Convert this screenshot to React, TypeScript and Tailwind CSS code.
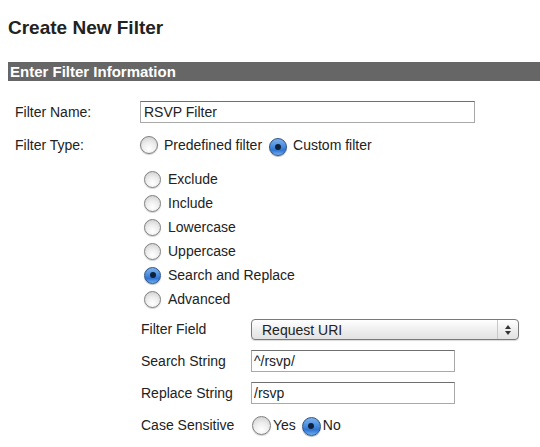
import { useState } from 'react';

type RadioProps = { checked: boolean; onClick?: () => void; size?: string };

// Aqua-style radio button drawn with gradients
function Radio({ checked, onClick, size = 'w-[18px] h-[18px]' }: RadioProps) {
  return (
    <span
      onClick={onClick}
      className={`${size} shrink-0 rounded-full inline-flex items-center justify-center border cursor-pointer ${
        checked
          ? 'border-[#2c5288] bg-[linear-gradient(180deg,#7fb2ec_0%,#4b8ede_45%,#2f74d2_70%,#6fb0f0_100%)] shadow-[0_1px_1px_rgba(0,0,0,0.3)]'
          : 'border-[#7f7f7f] bg-[radial-gradient(circle_at_50%_75%,#ffffff_0%,#eeeeee_45%,#c9c9c9_100%)] shadow-[0_1px_1px_rgba(0,0,0,0.2)]'
      }`}
    >
      {checked && <span className="w-[6px] h-[6px] rounded-full bg-[#10203a]" />}
    </span>
  );
}

const filterKinds = ['Exclude', 'Include', 'Lowercase', 'Uppercase', 'Search and Replace', 'Advanced'];

export default function App() {
  const [filterType, setFilterType] = useState<'predefined' | 'custom'>('custom');
  const [kind, setKind] = useState('Search and Replace');
  const [caseSensitive, setCaseSensitive] = useState(false);

  return (
    <div className="w-[540px] h-[447px] overflow-hidden bg-white text-[#222] font-['Liberation_Sans',Arial,sans-serif] text-[14px]">
      <h1 className="h-[56px] leading-[56px] pl-[8px] text-[19px] font-bold text-[#222]">Create New Filter</h1>

      <div className="mt-[6px] ml-[8px] h-[19px] bg-[#666666] flex items-center pl-[2px]">
        <span className="text-white font-bold text-[15px] leading-none">Enter Filter Information</span>
      </div>

      <div className="mt-[20px] flex flex-col">
        {/* Filter name */}
        <div className="h-[22px] flex items-center">
          <label className="w-[140px] pl-[15px]">Filter Name:</label>
          <input
            defaultValue="RSVP Filter"
            className="w-[335px] h-[22px] px-[3px] border border-[#a9a9a9] border-t-[#6f6f6f] outline-none text-[14px] text-[#222]"
          />
        </div>

        {/* Filter type */}
        <div className="mt-[11px] h-[22px] flex items-center">
          <label className="w-[140px] pl-[15px]">Filter Type:</label>
          <div className="flex items-center">
            <Radio checked={filterType === 'predefined'} onClick={() => setFilterType('predefined')} />
            <span className="ml-[6px]">Predefined filter</span>
            <span className="ml-[7px]">
              <Radio checked={filterType === 'custom'} onClick={() => setFilterType('custom')} />
            </span>
            <span className="ml-[6px]">Custom filter</span>
          </div>
        </div>

        {/* Custom filter kinds */}
        <div className="mt-[11px] pl-[144px] flex flex-col">
          {filterKinds.map((k) => (
            <div key={k} className="h-[24px] flex items-center">
              <Radio checked={kind === k} onClick={() => setKind(k)} size="w-[17px] h-[17px]" />
              <span className="ml-[7px]">{k}</span>
            </div>
          ))}
        </div>

        <div className="mt-[8px] pl-[141px] flex flex-col">
          <div className="h-[21px] flex items-center">
            <label className="w-[110px]">Filter Field</label>
            <div className="w-[268px] h-[21px] rounded-[4px] border border-[#7a7a7a] bg-[linear-gradient(#ffffff,#ececec_60%,#e2e2e2)] flex items-center shadow-[0_1px_1px_rgba(0,0,0,0.15)]">
              <span className="flex-1 pl-[10px] leading-none">Request URI</span>
              <span className="w-[21px] h-full border-l border-[#c8c8c8] flex items-center justify-center">
                <svg width="8" height="12" viewBox="0 0 8 12">
                  <path d="M4 1 L7 5 L1 5 Z" fill="#333" />
                  <path d="M4 11 L7 7 L1 7 Z" fill="#333" />
                </svg>
              </span>
            </div>
          </div>

          <div className="mt-[10px] h-[22px] flex items-center">
            <label className="w-[110px]">Search String</label>
            <input
              defaultValue="^/rsvp/"
              className="w-[204px] h-[22px] px-[2px] border border-[#a9a9a9] border-t-[#6f6f6f] outline-none text-[14px] text-[#222]"
            />
          </div>

          <div className="mt-[10px] h-[22px] flex items-center">
            <label className="w-[110px]">Replace String</label>
            <input
              defaultValue="/rsvp"
              className="w-[204px] h-[22px] px-[2px] border border-[#a9a9a9] border-t-[#6f6f6f] outline-none text-[14px] text-[#222]"
            />
          </div>

          <div className="mt-[10px] h-[22px] flex items-center">
            <label className="w-[111px]">Case Sensitive</label>
            <Radio checked={caseSensitive} onClick={() => setCaseSensitive(true)} size="w-[19px] h-[19px]" />
            <span className="ml-[2px]">Yes</span>
            <span className="ml-[6px]">
              <Radio checked={!caseSensitive} onClick={() => setCaseSensitive(false)} size="w-[19px] h-[19px]" />
            </span>
            <span className="ml-[2px]">No</span>
          </div>
        </div>
      </div>
    </div>
  );
}
